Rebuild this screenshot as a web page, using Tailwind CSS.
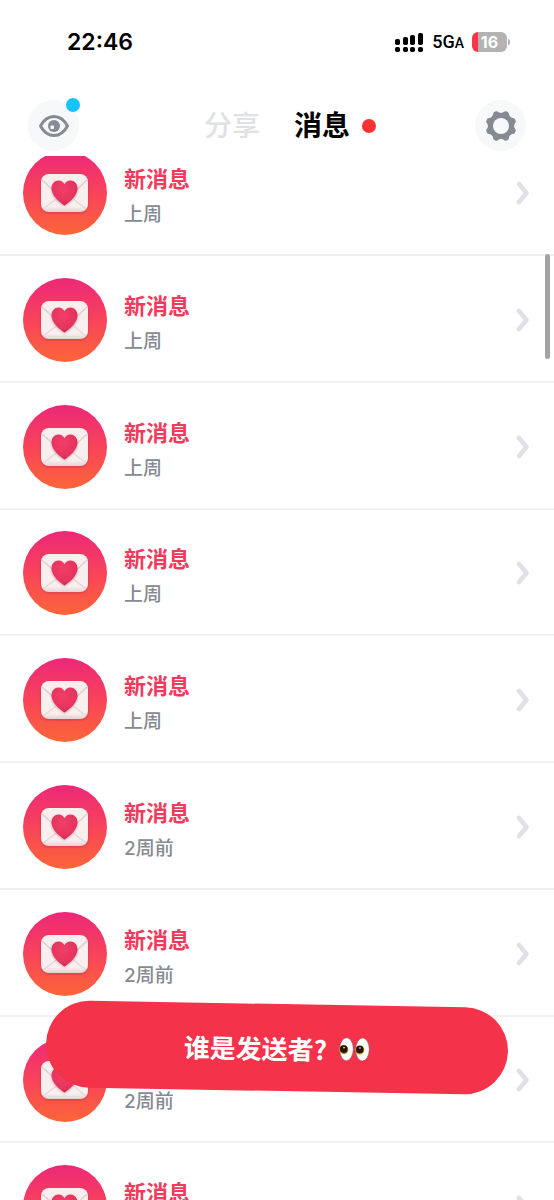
<!DOCTYPE html>
<html lang="zh-CN">
<head>
<meta charset="utf-8">
<meta name="viewport" content="width=device-width, initial-scale=1">
<title>消息</title>
<script src="https://cdn.jsdelivr.net/npm/@tailwindcss/browser@4"></script>
</head>
<body class="bg-white font-['Inter','Noto_Sans_CJK_SC',sans-serif]">
<svg class="absolute size-0" aria-hidden="true">
  <defs>
    <linearGradient id="disc" x1="0" y1="0" x2="0" y2="1"><stop offset="0" stop-color="#ec2878"/><stop offset=".5" stop-color="#f8435a"/><stop offset="1" stop-color="#fc6638"/></linearGradient>
    <linearGradient id="paper" x1="0" y1="0" x2="0" y2="1"><stop offset="0" stop-color="#f7eeee"/><stop offset=".85" stop-color="#f9efef"/><stop offset="1" stop-color="#e3d2d2"/></linearGradient>
    <radialGradient id="heartFill" cx=".45" cy=".35" r=".7"><stop offset="0" stop-color="#f03f69"/><stop offset=".7" stop-color="#e6345d"/><stop offset="1" stop-color="#bd2249"/></radialGradient>
    <filter id="soft" x="-20%" y="-20%" width="140%" height="150%"><feDropShadow dx="0" dy="1" stdDeviation="1" flood-color="#8c2030" flood-opacity=".35"/></filter>
  </defs>
  <symbol id="letter" viewBox="0 0 84 84">
    <circle cx="42" cy="42" r="42" fill="url(#disc)"/>
    <rect x="18" y="23" width="47" height="38" rx="8" fill="url(#paper)" filter="url(#soft)"/>
    <path d="M20 58 36 46M63 58 48 46" stroke="#e3d7d8" stroke-width="1.2" fill="none"/>
    <path d="M19 29 38 46q4 3 8 0L64 29" stroke="#dccfd0" stroke-width="1.4" fill="none"/>
    <path d="M41.5 54.500C36 51 28.500 44.500 28.500 37.500 28.500 32.500 31.800 29.500 35.500 29.500 38.300 29.500 40.300 31 41.500 33.200 42.700 31 44.700 29.500 47.500 29.500 51.200 29.500 54.500 32.500 54.500 37.500 54.500 44.500 47 51 41.500 54.500Z" fill="url(#heartFill)" filter="url(#soft)"/>
  </symbol>
  <symbol id="chevron" viewBox="0 0 14 24"><path d="M3 3 10.500 12 3 21" fill="none" stroke="#dfe1e4" stroke-width="4.500" stroke-linecap="round" stroke-linejoin="round"/></symbol>
</svg>

<div class="relative flex h-screen flex-col overflow-hidden">
  <header class="relative z-10 shrink-0 bg-white">
    <div class="flex h-[84px] items-center justify-between pr-11 pl-[67px] text-black">
      <time class="text-[23px] font-semibold">22:46</time>
      <div class="flex items-center gap-2">
        <svg class="h-[19px] w-[29px]" viewBox="0 0 29 19" role="img" aria-label="信号">
          <rect x="0" y="6" width="5" height="6" rx="1.800"/><rect x="8" y="4" width="5" height="8" rx="1.800"/><rect x="15" y="2" width="5" height="10" rx="1.800"/><rect x="23" y="0" width="5" height="12" rx="1.800"/>
          <rect x="0" y="14" width="5" height="5" rx="1.800"/><rect x="8" y="14" width="5" height="5" rx="1.800"/><rect x="15" y="14" width="5" height="5" rx="1.800"/><rect x="23" y="14" width="5" height="5" rx="1.800"/>
        </svg>
        <span class="font-['Roboto','Liberation_Sans',sans-serif] text-lg leading-none font-medium">5G<span class="text-sm leading-none">A</span></span>
        <div class="flex items-center gap-px">
          <div class="flex h-5 w-[35px] items-center justify-center rounded-md bg-linear-to-r from-[#fb3447] from-[16%] to-[#b3b3b3] to-[16%] text-base leading-none font-bold text-white">16</div>
          <div class="h-1.5 w-0.5 rounded-r-full bg-[#b3b3b3]"></div>
        </div>
      </div>
    </div>
    <div class="flex h-[72px] items-center justify-between px-7 pt-[11px]">
      <button type="button" aria-label="查看" class="relative flex size-[51px] items-center justify-center rounded-full bg-[#f6f8fa]">
        <svg class="h-[24px] w-[32px]" viewBox="0 0 32 24" fill="none">
          <path d="M2.500 12C6 5.500 10.500 2.500 16 2.500S26 5.500 29.500 12C26 18.500 21.500 21.500 16 21.500S6 18.500 2.500 12Z" stroke="#858a93" stroke-width="3" stroke-linejoin="round"/>
          <circle cx="16" cy="12" r="6" fill="#858a93"/><rect x="12.500" y="11.500" width="3.500" height="3.500" rx=".8" fill="#f6f8fa"/>
        </svg>
        <span class="absolute -top-0.5 -right-px size-3.5 rounded-full bg-[#17c3fc]"></span>
      </button>
      <nav class="flex items-center gap-[34px] pl-[26px] text-[28px] leading-none font-medium">
        <a href="#share" class="text-[#dfe1e4]">分享</a>
        <a href="#messages" aria-current="page" class="flex items-center gap-3 font-bold text-black">消息<span class="size-3.5 rounded-full bg-[#f63232]"></span></a>
      </nav>
      <button type="button" aria-label="设置" class="flex size-[51px] items-center justify-center rounded-full bg-[#f6f8fa]">
        <svg class="size-8" viewBox="-16 -16 32 32">
          <g fill="#858a93" stroke="#858a93" stroke-width="3" stroke-linejoin="round">
            <path d="M-4.500-13.300Q0-9.700 4.500-13.300L6.200-12.600Q6.900-6.900 12.600-6.200L13.300-4.500Q9.700 0 13.300 4.500L12.600 6.200Q6.900 6.900 6.200 12.600L4.500 13.300Q0 9.700-4.500 13.300L-6.200 12.600Q-6.900 6.900-12.600 6.200L-13.300 4.500Q-9.700 0-13.300-4.500L-12.600-6.200Q-6.900-6.900-6.200-12.600Z"/>
          </g>
          <circle r="8" fill="#f6f8fa"/>
        </svg>
      </button>
    </div>
  </header>

  <main class="relative min-h-0 flex-1 overflow-hidden">
    <ul class="-mt-[27px] [&>li]:h-[127px] [&>li]:border-b-2 [&>li]:border-[#f0f1f2] [&>li:nth-child(4n)]:h-[126px]">
      <li><a href="#m1" class="flex h-full items-center gap-[17px] pt-0.5 pr-6 pl-[23px]"><svg class="size-[84px] shrink-0"><use href="#letter"/></svg><span class="flex flex-1 flex-col gap-1 pt-2"><span class="text-[22px] leading-8 font-bold text-[#f13a5c]">新消息</span><span class="text-[19px] leading-8 font-medium text-[#858a93]">上周</span></span><svg class="h-6 w-3.5"><use href="#chevron"/></svg></a></li>
      <li><a href="#m2" class="flex h-full items-center gap-[17px] pt-0.5 pr-6 pl-[23px]"><svg class="size-[84px] shrink-0"><use href="#letter"/></svg><span class="flex flex-1 flex-col gap-1 pt-2"><span class="text-[22px] leading-8 font-bold text-[#f13a5c]">新消息</span><span class="text-[19px] leading-8 font-medium text-[#858a93]">上周</span></span><svg class="h-6 w-3.5"><use href="#chevron"/></svg></a></li>
      <li><a href="#m3" class="flex h-full items-center gap-[17px] pt-0.5 pr-6 pl-[23px]"><svg class="size-[84px] shrink-0"><use href="#letter"/></svg><span class="flex flex-1 flex-col gap-1 pt-2"><span class="text-[22px] leading-8 font-bold text-[#f13a5c]">新消息</span><span class="text-[19px] leading-8 font-medium text-[#858a93]">上周</span></span><svg class="h-6 w-3.5"><use href="#chevron"/></svg></a></li>
      <li><a href="#m4" class="flex h-full items-center gap-[17px] pt-0.5 pr-6 pl-[23px]"><svg class="size-[84px] shrink-0"><use href="#letter"/></svg><span class="flex flex-1 flex-col gap-1 pt-2"><span class="text-[22px] leading-8 font-bold text-[#f13a5c]">新消息</span><span class="text-[19px] leading-8 font-medium text-[#858a93]">上周</span></span><svg class="h-6 w-3.5"><use href="#chevron"/></svg></a></li>
      <li><a href="#m5" class="flex h-full items-center gap-[17px] pt-0.5 pr-6 pl-[23px]"><svg class="size-[84px] shrink-0"><use href="#letter"/></svg><span class="flex flex-1 flex-col gap-1 pt-2"><span class="text-[22px] leading-8 font-bold text-[#f13a5c]">新消息</span><span class="text-[19px] leading-8 font-medium text-[#858a93]">上周</span></span><svg class="h-6 w-3.5"><use href="#chevron"/></svg></a></li>
      <li><a href="#m6" class="flex h-full items-center gap-[17px] pt-0.5 pr-6 pl-[23px]"><svg class="size-[84px] shrink-0"><use href="#letter"/></svg><span class="flex flex-1 flex-col gap-1 pt-2"><span class="text-[22px] leading-8 font-bold text-[#f13a5c]">新消息</span><span class="text-[19px] leading-8 font-medium text-[#858a93]">2周前</span></span><svg class="h-6 w-3.5"><use href="#chevron"/></svg></a></li>
      <li><a href="#m7" class="flex h-full items-center gap-[17px] pt-0.5 pr-6 pl-[23px]"><svg class="size-[84px] shrink-0"><use href="#letter"/></svg><span class="flex flex-1 flex-col gap-1 pt-2"><span class="text-[22px] leading-8 font-bold text-[#f13a5c]">新消息</span><span class="text-[19px] leading-8 font-medium text-[#858a93]">2周前</span></span><svg class="h-6 w-3.5"><use href="#chevron"/></svg></a></li>
      <li><a href="#m8" class="flex h-full items-center gap-[17px] pt-0.5 pr-6 pl-[23px]"><svg class="size-[84px] shrink-0"><use href="#letter"/></svg><span class="flex flex-1 flex-col gap-1 pt-2"><span class="text-[22px] leading-8 font-bold text-[#f13a5c]">新消息</span><span class="text-[19px] leading-8 font-medium text-[#858a93]">2周前</span></span><svg class="h-6 w-3.5"><use href="#chevron"/></svg></a></li>
      <li><a href="#m9" class="flex h-full items-center gap-[17px] pt-0.5 pr-6 pl-[23px]"><svg class="size-[84px] shrink-0"><use href="#letter"/></svg><span class="flex flex-1 flex-col gap-1 pt-2"><span class="text-[22px] leading-8 font-bold text-[#f13a5c]">新消息</span><span class="text-[19px] leading-8 font-medium text-[#858a93]">2周前</span></span><svg class="h-6 w-3.5"><use href="#chevron"/></svg></a></li>
    </ul>
    <div class="absolute top-[98px] right-1 h-[105px] w-[5px] rounded-full bg-[#a3a3a3]"></div>
  </main>

  <button type="button" class="absolute inset-x-[46px] bottom-[109px] flex h-[87px] rotate-1 items-center justify-center gap-3 rounded-full bg-[#f4324a] font-['Noto_Sans_CJK_SC',sans-serif] text-[26px] leading-none font-bold text-white">
    <span>谁是发送者?</span>
    <svg class="h-6 w-[31px]" viewBox="0 0 31 24" role="img" aria-label="眼睛">
      <g stroke="#7d6068" stroke-width=".6" fill="#fff"><ellipse cx="7.500" cy="12" rx="6.800" ry="11.500"/><ellipse cx="23.500" cy="12" rx="6.800" ry="11.500"/></g>
      <g fill="#b99a20"><circle cx="4.800" cy="12.500" r="4.600"/><circle cx="20.800" cy="12.500" r="4.600"/></g>
      <g fill="#2b1210"><circle cx="4.800" cy="12" r="3.800"/><circle cx="20.800" cy="12" r="3.800"/></g>
      <g fill="#fff"><circle cx="5" cy="10.500" r=".8"/><circle cx="21" cy="10.500" r=".8"/></g>
    </svg>
  </button>
</div>
</body>
</html>
